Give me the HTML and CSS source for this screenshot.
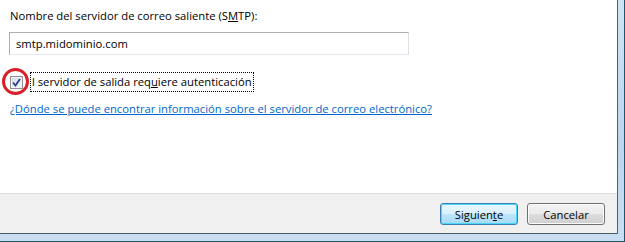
FILE: index.html
```html
<!DOCTYPE html>
<html lang="es">
<head>
    <meta charset="UTF-8">
    <title>Configuración de correo</title>
    <link rel="stylesheet" href="styles.css">
</head>
<body>
    <div class="frame">
        <div class="dialog">
            <div class="content">
                <label class="field-label" for="smtp">Nombre del servidor de correo saliente (S<u>M</u>TP):</label>
                <input class="text-box" id="smtp" type="text" value="smtp.midominio.com">

                <div class="check-row">
                    <span class="checkbox">
                        <svg width="9" height="9" viewBox="0 0 9 9"><path d="M1 4.5 L3.5 7.5 L8 1" fill="none" stroke="#2a3f8f" stroke-width="1.8"/></svg>
                    </span>
                    <span class="check-text">l servidor de salida req<u>u</u>iere autenticación</span>
                    <span class="mark-circle"></span>
                </div>

                <a class="help-link" href="#">¿Dónde se puede encontrar información sobre el servidor de correo electrónico?</a>
            </div>
            <div class="footer">
                <button class="btn btn-default">Siguien<u>t</u>e</button>
                <button class="btn">Cancelar</button>
            </div>
        </div>
    </div>
</body>
</html>
```

FILE: styles.css
```css
html, body {
    margin: 0;
    padding: 0;
    background: #fff;
}

body {
    font-family: "Open Sans", "Noto Sans", sans-serif;
    font-size: 11.25px;
    color: #000;
}

.frame {
    width: 625px;
    height: 242px;
    box-sizing: border-box;
    padding: 0 6px 7px 0;
    background: linear-gradient(180deg, #cfe3f4 0%, #bcd6ee 60%, #c9def2 100%);
    border-right: 1px solid #1d5468;
    border-bottom: 1px solid #1d5468;
}

.dialog {
    height: 100%;
    box-sizing: border-box;
    display: flex;
    flex-direction: column;
    border-right: 1px solid #4e5f6e;
    border-bottom: 1px solid #4e5f6e;
    background: #fff;
}

.content {
    flex: 1;
    position: relative;
    padding: 8px 0 0 10px;
}

.field-label {
    display: block;
    line-height: 16px;
    height: 16px;
}

.text-box {
    display: block;
    margin: 8px 0 0 -1px;
    width: 400px;
    height: 23px;
    box-sizing: border-box;
    padding: 0 6px;
    font-family: inherit;
    font-size: 11.25px;
    color: #000;
    border: 1px solid #abadb3;
    border-bottom-color: #e3e9ef;
    border-right-color: #dbdfe6;
    outline: none;
}

.check-row {
    position: relative;
    display: flex;
    align-items: center;
    margin-top: 17px;
    height: 20px;
}

.checkbox {
    width: 11px;
    height: 11px;
    border: 1px solid #8e8f8f;
    background: linear-gradient(135deg, #d6dbe2, #f8f9fb);
    display: flex;
    align-items: center;
    justify-content: center;
    box-shadow: inset 0 0 0 1px #f4f4f4;
}

.check-text {
    margin-left: 8px;
    padding: 1px 1px;
    outline: 1px dotted #000;
    line-height: 16px;
}

.mark-circle {
    position: absolute;
    left: -8px;
    top: -4px;
    width: 21px;
    height: 21px;
    border: 3px solid #d8202a;
    border-radius: 50%;
}

.help-link {
    display: inline-block;
    margin-top: 9px;
    color: #0066cc;
    text-decoration: underline;
    line-height: 16px;
}

.footer {
    height: 40px;
    box-sizing: border-box;
    background: #f0f0f0;
    border-top: 1px solid #dfdfdf;
    display: flex;
    justify-content: flex-end;
    align-items: flex-start;
    gap: 9px;
    padding: 9px 12px 0 0;
}

.btn {
    width: 78px;
    height: 22px;
    font-family: inherit;
    font-size: 11.25px;
    color: #000;
    padding: 0;
    border: 1px solid #707070;
    border-radius: 3px;
    background: linear-gradient(180deg, #f2f2f2 0%, #ebebeb 50%, #dddddd 51%, #cfcfcf 100%);
    box-shadow: inset 0 0 0 1px #fcfcfc;
}

.btn-default {
    border-color: #3c7fb1;
    background: linear-gradient(180deg, #eaf6fd 0%, #d9f0fc 50%, #bee6fd 51%, #a7d9f5 100%);
    box-shadow: inset 0 0 0 1px #48d8fb;
}
```
